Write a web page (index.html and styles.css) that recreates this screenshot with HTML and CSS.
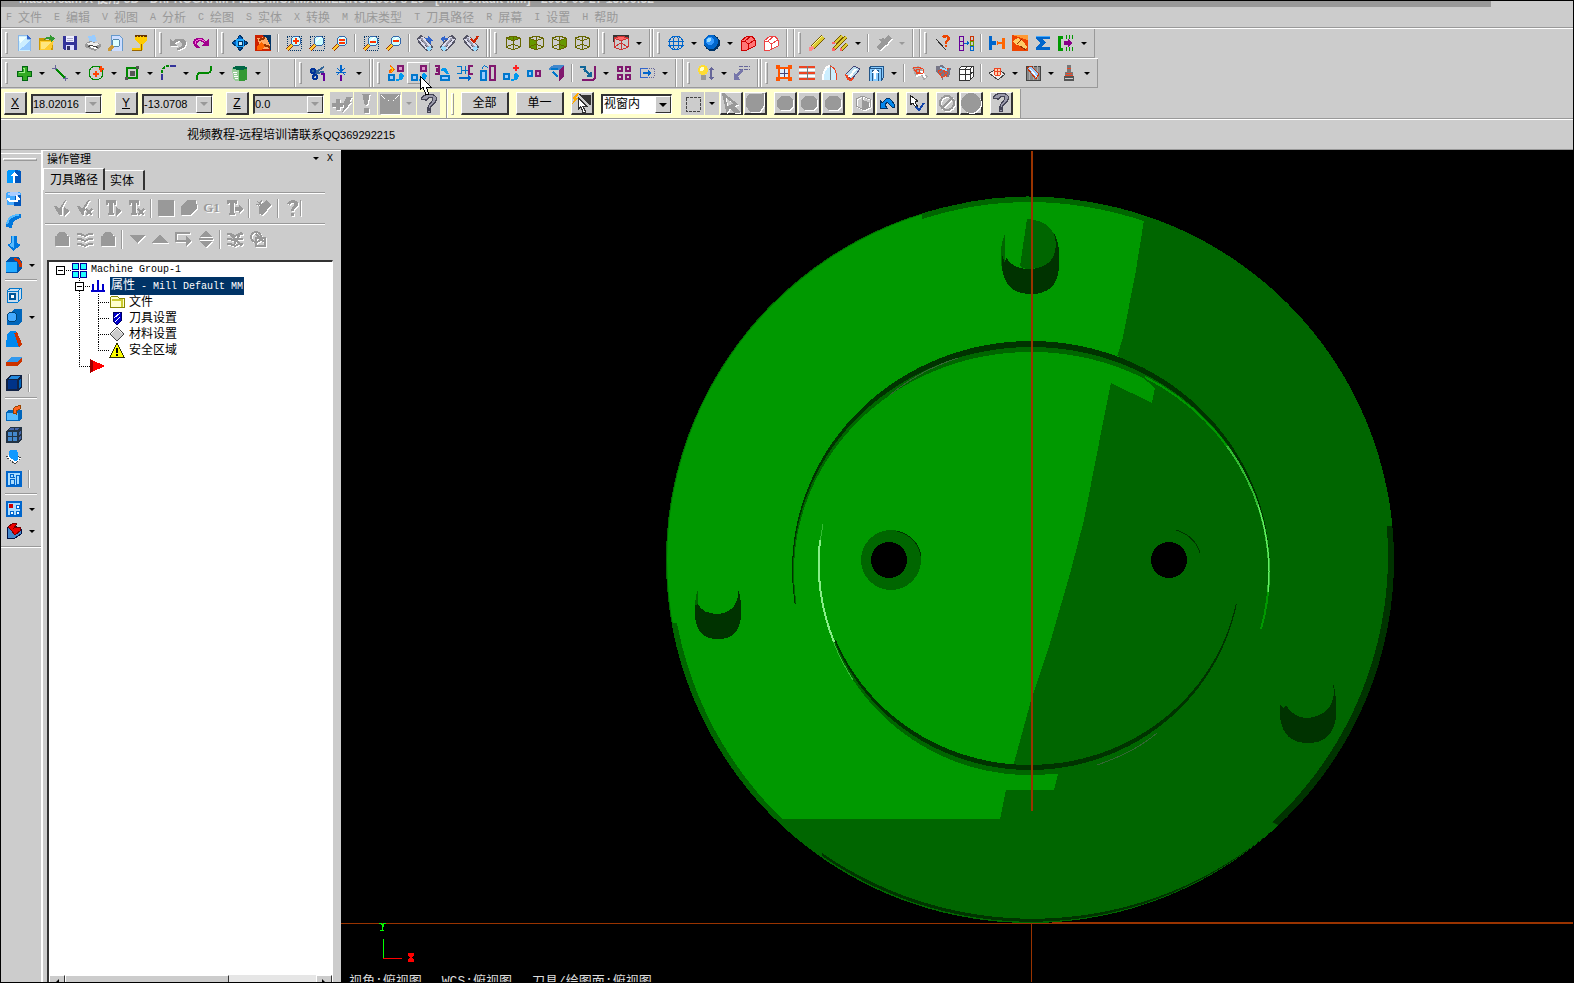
FILE: index.html
```html
<!DOCTYPE html>
<html lang="zh-CN">
<head>
    <meta charset="UTF-8">
    <meta name="viewport" content="width=device-width, initial-scale=1.0">
    <title>Mastercam X</title>
    <link rel="stylesheet" href="styles.css">
</head>
<body>
    <!-- Iconos -->
    <svg class="sprite" aria-hidden="true">
        <symbol id="new" viewBox="0 0 16 16"><path d="M2 0h9l3 3v13H2z" fill="#cef"/><path d="M3 15h11V5L7 12z" fill="#9cf"/><path d="M3 2h7L4 9z" fill="#eff"/><path d="M2 16V0h9v4h3v12z" fill="none" stroke="#8ab8e8"/><path d="M11 0l4 4h-4z" fill="#36c"/></symbol>
        <symbol id="open" viewBox="0 0 16 16"><path d="M0 3h5l2 2h7v10H0z" fill="#c90"/><path d="M1 6h14l-3 9H1z" fill="#fc3"/><path d="M2 7h11l-8 7H2z" fill="#ffe680"/><path d="M5 5c1-3 4-4 6-3V0l5 3-4 4V5C9 4 7 4 5 5z" fill="#393"/></symbol>
        <symbol id="save" viewBox="0 0 16 16"><path d="M1 1h14v14H2l-1-1z" fill="#339"/><path d="M4 1h8v6H4z" fill="#eef"/><path d="M5 3h6M5 5h6" stroke="#aac"/><path d="M4 10h8v5H4z" fill="#ddf"/><path d="M5 11h3v4H5z" fill="#336"/></symbol>
        <symbol id="print" viewBox="0 0 16 16"><path d="M3 1l7-1 2 6-7 2z" fill="#9cf"/><path d="M0 9l5-3 11 3v3l-6 4-10-4z" fill="#999"/><path d="M1 9l5-2 9 2-5 3z" fill="#eee"/><path d="M2 11l8 3 4-2-8-2z" fill="#444"/><path d="M4 12l6 2 3-1-7-2z" fill="#fff"/></symbol>
        <symbol id="preview" viewBox="0 0 16 16"><path d="M3 0h8l3 3v13H3z" fill="#cdf" stroke="#69c"/><circle cx="8" cy="8" r="4" fill="#dff" stroke="#58a"/><path d="M5 11l-5 5" stroke="#c93" stroke-width="3"/></symbol>
        <symbol id="filter" viewBox="0 0 16 16"><path d="M4 0h12v5l-4 4v6H1v-2h8V9L4 5z" fill="#fc0"/><path d="M4 0h12v2H4z" fill="#630"/><path d="M6 1h1M9 1h1M12 1h1" stroke="#fc0"/><path d="M1 15h9V9" fill="none" stroke="#960"/></symbol>
        <symbol id="undo" viewBox="0 0 16 16"><path d="M0 4v7h7L5 8c3-3 8-2 7 2-1 2-3 3-5 3v2c5 0 9-3 9-7 0-5-9-6-13-2z" fill="#999"/></symbol>
        <symbol id="redo" viewBox="0 0 16 16"><path d="M16 4v7H9l2-3C8 5 3 6 4 10l3 3H3C-1 10-1 4 4 3c4-1 7 0 9 3z" fill="#a0008c"/><path d="M2 9c0-5 7-6 10-2" fill="none" stroke="#f6d"/></symbol>
        <symbol id="fit" viewBox="0 0 16 16"><path d="M8 0l3 4H5zM8 16l3-4H5zM0 8l4-3v6zM16 8l-4-3v6z" fill="#06c" stroke="#036"/><path d="M4 4h8v8H4z" fill="#2af"/><path d="M6 6h4v4H6z" fill="#cef" stroke="#036"/></symbol>
        <symbol id="repaint" viewBox="0 0 16 16"><path d="M0 0h16v16H0z" fill="#c20"/><path d="M8 0h8v16z" fill="#036"/><path d="M2 3l9-1 4 8-1 4-8 0z" fill="#fa6"/><path d="M2 12l4-5 4 4-4 4H2z" fill="#f60"/><path d="M4 5l6-2M9 10l6 2" stroke="#930" stroke-width="2"/></symbol>
        <symbol id="lens" viewBox="0 0 16 16"><path d="M7 9l-6 6" stroke="#930" stroke-width="4"/><path d="M7 9l-6 6" stroke="#fc3" stroke-width="2"/><circle cx="10" cy="6" r="5" fill="#cff" stroke="#36a"/><path d="M7 5l3-3h2L7 7z" fill="#fff"/></symbol>
        <symbol id="dots" viewBox="0 0 16 16"><path d="M1 1h14v14H1z" fill="none" stroke="#036" stroke-dasharray="1 1"/></symbol>
        <symbol id="zoom-in" viewBox="0 0 16 16"><use href="#dots"/><use href="#lens"/><path d="M7 6h6M10 3v6" stroke="#f30" stroke-width="2"/></symbol>
        <symbol id="zoom-win" viewBox="0 0 16 16"><use href="#dots"/><use href="#lens"/></symbol>
        <symbol id="zoom-eq" viewBox="0 0 16 16"><use href="#lens"/><path d="M7 5h6M7 8h6" stroke="#f30" stroke-width="2"/></symbol>
        <symbol id="zoom-out" viewBox="0 0 16 16"><use href="#dots"/><use href="#lens"/><path d="M7 7h6" stroke="#f30" stroke-width="2"/></symbol>
        <symbol id="zoom-minus" viewBox="0 0 16 16"><use href="#lens"/><path d="M7 6h6" stroke="#f30" stroke-width="2"/></symbol>
        <symbol id="tube" viewBox="0 0 16 16"><path d="M0 3l4-3 5 3 7 9-2 4h-5L1 7z" fill="#556"/><path d="M2 4l8 10M5 2l8 9" stroke="#dde" stroke-width="2"/><path d="M4 3l8 10" stroke="#99a" stroke-width="2"/><path d="M10 12l4-1 1 3-3 2-2-1z" fill="#9df"/></symbol>
        <symbol id="tube-a" viewBox="0 0 16 16"><use href="#tube"/><path d="M8 3h3V1l5 5h-2v3L9 5z" fill="#36c"/></symbol>
        <symbol id="tube-b" viewBox="0 0 16 16"><g transform="matrix(-1 0 0 1 16 0)"><use href="#tube"/></g><path d="M8 3H5V1L0 4l4 3V5h4z" fill="#36c"/></symbol>
        <symbol id="tube-c" viewBox="0 0 16 16"><use href="#tube"/><path d="M8 4l3 3 4-6" fill="none" stroke="#c20" stroke-width="2"/></symbol>
        <symbol id="wire" viewBox="0 0 16 16"><path d="M8 1l7 2v9l-7 3-7-3V3zM1 3l7 3 7-3M8 1v14M1 12l7-3 7 3" fill="none" stroke="#660"/></symbol>
        <symbol id="cube-t" viewBox="0 0 16 16"><path d="M8 1l7 2-7 3-7-3z" fill="#690"/><use href="#wire"/></symbol>
        <symbol id="cube-l" viewBox="0 0 16 16"><path d="M1 3l7 3v9l-7-3z" fill="#690"/><use href="#wire"/></symbol>
        <symbol id="cube-r" viewBox="0 0 16 16"><path d="M15 3L8 6v9l7-3z" fill="#690"/><use href="#wire"/></symbol>
        <symbol id="cube-red" viewBox="0 0 16 16"><path d="M0 0h16v7H0z" fill="#333"/><path d="M1 3l7-2 7 2v9l-7 3-7-3z" fill="#ccc"/><path d="M1 3l7-2 7 2-7 3z" fill="#f66"/><path d="M8 1l7 2v9l-7 3-7-3V3zM1 3l7 3 7-3M8 6v9M1 12l7-4 7 4" fill="none" stroke="#c33"/></symbol>
        <symbol id="globe" viewBox="0 0 16 16"><g fill="none" stroke="#06c"><circle cx="8" cy="8" r="7"/><ellipse cx="8" cy="8" rx="3" ry="7"/><path d="M0 6h16M0 10h16"/></g></symbol>
        <symbol id="ball" viewBox="0 0 16 16"><circle cx="8" cy="8" r="8" fill="#036"/><circle cx="7" cy="7" r="7" fill="#06c"/><circle cx="6" cy="6" r="4" fill="#39f"/><circle cx="5" cy="5" r="2" fill="#9df"/></symbol>
        <symbol id="block-red" viewBox="0 0 16 16"><path d="M1 6l6-5h5l3 4v6l-8 4H1z" fill="#f77" stroke="#c00"/><path d="M1 6h4l3 3v6M5 6l6-5M8 9l7-4" fill="none" stroke="#c00"/></symbol>
        <symbol id="block-white" viewBox="0 0 16 16"><path d="M1 6l6-5h5l3 4v6l-8 4H1z" fill="#fff" stroke="#e44"/><path d="M1 6h4l3 3v6M5 6l6-5M8 9l7-4" fill="none" stroke="#e44"/></symbol>
        <symbol id="pencil" viewBox="0 0 16 16"><path d="M3 13L14 2" stroke="#750" stroke-width="5"/><path d="M3 13L14 2" stroke="#dc3" stroke-width="3"/><path d="M3 11L13 1" stroke="#ff9"/><path d="M0 12l3-1 2 2-2 3H0z" fill="#f88"/></symbol>
        <symbol id="pencils" viewBox="0 0 16 16"><path d="M3 8l7-7M2 14L14 2M9 15l6-6" stroke="#750" stroke-width="4"/><path d="M3 8l7-7M2 14L14 2M9 15l6-6" stroke="#dc3" stroke-width="2"/><path d="M0 7h3v2H0zM0 13h3v3H0zM8 13h2v3H8z" fill="#f66"/></symbol>
        <symbol id="pencil-off" viewBox="0 0 16 16"><path d="M2 14L14 2" stroke="#999" stroke-width="5"/><path d="M3 4l5-1 4 6-4 2z" fill="#999"/></symbol>
        <symbol id="line-q" viewBox="0 0 16 16"><path d="M1 4l10 11" stroke="#333"/><path d="M7 2c1-3 8-3 8 1 0 3-3 3-3 6h-2c0-4 2-4 2-6 0-1-2-1-3 1zM10 10h2v2h-2z" fill="#e40"/></symbol>
        <symbol id="columns" viewBox="0 0 16 16"><path d="M1 1h4v14H1zM1 6h4M1 10h4" fill="none" stroke="#609"/><path d="M6 8h3V6l2 2-2 3V9H6z" fill="#06c"/><path d="M12 1h3v4h-3z" fill="none" stroke="#c30"/><path d="M12 6h3v4h-3z" fill="none" stroke="#690"/><path d="M12 11h3v4h-3z" fill="none" stroke="#06c"/></symbol>
        <symbol id="clamp" viewBox="0 0 16 16"><path d="M0 1h3v5h4v4H3v5H0z" fill="#06c"/><path d="M16 3h-3v4H9l-1-2v6l1-2h4v5h3z" fill="#f60"/></symbol>
        <symbol id="card" viewBox="0 0 16 16"><path d="M0 0h16v16H0z" fill="#e40"/><path d="M0 0h16v5z" fill="#f93"/><path d="M1 6l5-3 5 3 4 6-2 3-4-4-5-1z" fill="#fc6"/><path d="M5 9l5-5M8 11l6 4" stroke="#930"/></symbol>
        <symbol id="sigma" viewBox="0 0 16 16"><path d="M1 1h14v3H7l4 4-5 4h9v3H1v-3l5-4-5-4z" fill="#06c"/><path d="M1 1h14" stroke="#4af"/></symbol>
        <symbol id="exit" viewBox="0 0 16 16"><path d="M5 2H1v12h4" fill="none" stroke="#090" stroke-width="3"/><path d="M6 6h4V4l5 4-5 4v-2H6z" fill="#808"/><path d="M8 0v4M11 0v4M14 0v4M8 12v4M11 12v4M14 12v4" stroke="#090"/></symbol>
        <symbol id="plus" viewBox="0 0 16 16"><path d="M6 1h5v5h4v5h-4v4H6v-4H1V6h5z" fill="#3a2" stroke="#061"/><path d="M7 3h1v4H3" fill="none" stroke="#9e8"/></symbol>
        <symbol id="line" viewBox="0 0 16 16"><path d="M3 3l10 10" stroke="#080" stroke-width="2"/><path d="M0 3h5M3 0v5M11 13h5M13 11v5" stroke="#669"/></symbol>
        <symbol id="circle" viewBox="0 0 16 16"><circle cx="8" cy="8" r="7" fill="none" stroke="#080"/><path d="M5 9h6M8 6v6M11 4h5M13 1v6" stroke="#f40" stroke-width="2"/></symbol>
        <symbol id="rect" viewBox="0 0 16 16"><path d="M3 3h10v10H3z" fill="none" stroke="#080" stroke-width="2"/><path d="M6 6h5v5H6zM12 1h3v3h-3zM1 12h3v3H1z" fill="#555"/></symbol>
        <symbol id="fillet" viewBox="0 0 16 16"><path d="M2 15V9M10 1h6" stroke="#339" stroke-width="2"/><path d="M2 8c0-4 3-7 7-7" fill="none" stroke="#080" stroke-width="2" stroke-dasharray="3 1"/></symbol>
        <symbol id="spline" viewBox="0 0 16 16"><path d="M1 15c0-8 1-7 7-7s7 0 7-7" fill="none" stroke="#080" stroke-width="2"/></symbol>
        <symbol id="cyl" viewBox="0 0 16 16"><path d="M0 3h15v12l-4 1H3l-2-3z" fill="#9c9"/><path d="M7 4h8v11l-4 1H7z" fill="#393"/><ellipse cx="8" cy="3" rx="7" ry="2" fill="#064"/><path d="M1 7h4M2 9h3M2 11h4M3 13h3" stroke="#fff"/></symbol>
        <symbol id="scissors" viewBox="0 0 16 16"><path d="M1 6l5 1 8-5M4 12l2-4 8-1" fill="none" stroke="#369" stroke-width="2"/><circle cx="3" cy="6" r="2" fill="none" stroke="#039" stroke-width="2"/><circle cx="5" cy="12" r="2" fill="none" stroke="#039" stroke-width="2"/><path d="M14 9v7M11 9h4" stroke="#609" stroke-width="2"/></symbol>
        <symbol id="break" viewBox="0 0 16 16"><path d="M8 0v7" stroke="#06c" stroke-width="2"/><path d="M8 10v6" stroke="#609" stroke-width="2"/><path d="M4 3l8 7M12 3l-8 7M3 7h10" stroke="#06c"/></symbol>
        <symbol id="sq2" viewBox="0 0 16 16"><path d="M10 1h5v5h-5z" fill="#d9c" stroke="#80186e" stroke-width="2"/><path d="M1 10h5v5H1z" fill="#9cf" stroke="#07c" stroke-width="2"/></symbol>
        <symbol id="x1" viewBox="0 0 16 16"><use href="#sq2"/><path d="M2 0l3 3 2 1-3 4H1V5l2-1z" fill="#f60"/><path d="M3 2l2 3-2 2" fill="none" stroke="#fd0"/><path d="M8 14c4 1 4-4 2-4l3-2 3 3c0 3-4 5-8 5z" fill="#09e"/></symbol>
        <symbol id="x2" viewBox="0 0 16 16"><use href="#sq2"/><path d="M8 14c4 1 4-4 2-4l3-2 3 3c0 3-4 5-8 5z" fill="#09e"/></symbol>
        <symbol id="x3" viewBox="0 0 16 16"><path d="M1 1h4v3H3v2h2v3H1" fill="none" stroke="#80186e" stroke-width="2"/><path d="M7 11h8v4H7z" fill="#9cf" stroke="#07c" stroke-width="2"/><path d="M8 3h4l3 6h-3L9 6H7z" fill="#09e"/></symbol>
        <symbol id="x4" viewBox="0 0 16 16"><path d="M0 1h4v7H0M8 1v8M5 5h6" fill="none" stroke="#07c"/><path d="M16 1h-4v8h4" fill="none" stroke="#80186e" stroke-width="2"/><path d="M2 12h9v-2l4 3-4 3v-2H2z" fill="#06c"/></symbol>
        <symbol id="x5" viewBox="0 0 16 16"><path d="M1 6h5v9H1z" fill="#9cf" stroke="#07c" stroke-width="2"/><path d="M10 1h5v14h-5z" fill="#ccc" stroke="#80186e" stroke-width="2"/><path d="M2 4c1-4 4-4 6-1" fill="none" stroke="#07c"/></symbol>
        <symbol id="x6" viewBox="0 0 16 16"><path d="M10 3h6M13 0v6" stroke="#f22" stroke-width="2"/><path d="M1 9h5v5H1z" fill="#9cf" stroke="#07c" stroke-width="2"/><path d="M8 14c4 1 4-4 2-4l3-2 3 3c0 3-4 5-8 5z" fill="#09e"/></symbol>
        <symbol id="x7" viewBox="0 0 16 16"><path d="M2 6h4v5H2z" fill="#9cf" stroke="#07c" stroke-width="2"/><path d="M10 6h4v5h-4z" fill="#d9c" stroke="#80186e" stroke-width="2"/></symbol>
        <symbol id="x8" viewBox="0 0 16 16"><path d="M0 3l5-3h10v2l-5 3H0z" fill="#48c"/><path d="M10 5l5-4v11l-5 4z" fill="#80186e"/><path d="M2 4h7M4 7l5 5" stroke="#07c" stroke-width="2"/></symbol>
        <symbol id="offset" viewBox="0 0 16 16"><path d="M0 2h5v5M4 4l7 7M11 7v4H7" fill="none" stroke="#169" stroke-width="2"/><path d="M2 15h9c3 0 4-1 4-4V1" fill="none" stroke="#80186e" stroke-width="2"/></symbol>
        <symbol id="grid4" viewBox="0 0 16 16"><path d="M2 2h4v4H2zM10 2h4v4h-4zM2 10h4v4H2zM10 10h4v4h-4z" fill="#ccc" stroke="#80186e" stroke-width="2"/></symbol>
        <symbol id="stretch" viewBox="0 0 16 16"><path d="M9 3H1v9h8" fill="none" stroke="#36c"/><path d="M4 7h5V5l3 3-3 3V9H4z" fill="#06c"/><path d="M10 3h5v9h-5" fill="none" stroke="#669" stroke-dasharray="1 1"/></symbol>
        <symbol id="bulb" viewBox="0 0 16 16"><circle cx="5" cy="5" r="5" fill="#fd3"/><circle cx="4" cy="4" r="2" fill="#ffc"/><path d="M3 10h5v5H3z" fill="#999"/><path d="M13 2l3 3h-2v7h2l-3 3-3-3h2V5h-2z" fill="#669"/></symbol>
        <symbol id="leader" viewBox="0 0 16 16"><path d="M5 1h11M5 4h11" stroke="#669" stroke-dasharray="4 1"/><path d="M9 6l-5 5 2 4H0V8l2 1 5-5z" fill="#77a"/></symbol>
        <symbol id="g-box" viewBox="0 0 16 16"><path d="M0 0h4v2h8V0h4v4h-2v8h2v4h-4v-2H4v2H0v-4h2V4H0z" fill="#f50"/><path d="M4 4h8v8H4z" fill="#def"/><path d="M8 4v8M4 8h8" stroke="#447"/></symbol>
        <symbol id="g-lines" viewBox="0 0 16 16"><path d="M0 2h16M0 8h16M0 14h16" stroke="#e42" stroke-width="2"/><path d="M0 5h16M0 11h16" stroke="#fff" stroke-width="2"/><path d="M8 1v14" stroke="#777"/></symbol>
        <symbol id="g-rev" viewBox="0 0 16 16"><path d="M8 1c5 1 7 6 7 14H1C1 7 3 2 8 1z" fill="#cef"/><path d="M8 1C3 2 1 8 1 15" fill="none" stroke="#fff" stroke-width="2"/><path d="M8 0v15" stroke="#777"/><path d="M8 1c5 1 7 6 7 14" fill="none" stroke="#e42"/></symbol>
        <symbol id="g-swept" viewBox="0 0 16 16"><path d="M0 10L9 1l6 3-8 10z" fill="#bde" stroke="#447"/><path d="M4 12l7-8" stroke="#fff" stroke-width="2"/><path d="M0 10l2 1 1 3 3 1 2-2" fill="none" stroke="#e42" stroke-width="2"/></symbol>
        <symbol id="g-draft" viewBox="0 0 16 16"><path d="M1 3l3-2h11v12l-2 3H1z" fill="#8cf" stroke="#258"/><path d="M1 3h12v12M4 5h6v11H4z" fill="none" stroke="#258"/><path d="M7 4l4 4H8v6H6V8H3z" fill="#fff"/></symbol>
        <symbol id="g-net" viewBox="0 0 16 16"><path d="M0 3l6-2 4 3 2 5 4 2-4 5-3-6-5 2z" fill="#aaa"/><path d="M4 11l7-2 2 4M9 6l4 6" fill="none" stroke="#fff" stroke-width="2"/><path d="M1 2h5l5 2v4L5 9zM4 4h3v3H4z" fill="none" stroke="#e42"/></symbol>
        <symbol id="g-net2" viewBox="0 0 16 16"><path d="M1 1l7-1 3 4 5-1-2 9-5-1-2 5-1-6-5-3z" fill="#778"/><path d="M3 6l5-2 5 4-6 5zM6 2l6 10M14 3L4 10" fill="none" stroke="#e42"/><path d="M5 3l7 2" stroke="#9df" stroke-width="2"/></symbol>
        <symbol id="g-cube" viewBox="0 0 16 16"><path d="M1 4l3-3h11v11l-3 3H1z" fill="#fff"/><path d="M1 4l3-3h11v11l-3 3H1zM1 4h11v11M12 4l3-3M7 4v11M1 9h11l3-2M7 4l3-3" fill="none" stroke="#333"/></symbol>
        <symbol id="g-surf" viewBox="0 0 16 16"><path d="M0 8l8-4 8 5-7 6z" fill="#eee" stroke="#444"/><path d="M5 3h7l-1 7H6zM5 6h7M8 3v7" fill="#fca" stroke="#e42"/></symbol>
        <symbol id="g-hatch" viewBox="0 0 16 16"><path d="M1 1h14v14H1z" fill="#888" stroke="#444"/><path d="M4 1v14M8 1v14M12 1v14" stroke="#aaa"/><path d="M2 3l4-2 8 8-3 5z" fill="#9cf" stroke="#c30"/><path d="M5 4l7 8" stroke="#fff"/></symbol>
        <symbol id="g-tool" viewBox="0 0 16 16"><path d="M6 0h4v7h2v3H4V7h2z" fill="#777"/><path d="M3 11h10v5H3z" fill="#555"/><path d="M6 3h4M5 8h6M4 10h8" stroke="#e42"/><path d="M4 13h8" stroke="#ccc"/></symbol>

        <symbol id="flash" viewBox="0 0 16 16"><path d="M3 4h3v3h3v3H6v3H3v-3H0V7h3zM8 9l4-7h4l-2 4h2l-8 9 2-6z" fill="#999"/></symbol>
        <symbol id="bang" viewBox="0 0 16 16"><path d="M5 0h6L9 9H7zM6 11h4v4H6z" fill="#999"/></symbol>
        <symbol id="box-off" viewBox="0 0 16 16"><path d="M0 0h16v16H0z" fill="#999"/><path d="M1 1l3 3M15 1l-3 3M6 5h1M10 5h1" stroke="#fff"/></symbol>
        <symbol id="help" viewBox="0 0 16 16"><path d="M2 4c1-5 12-5 12 0 0 4-5 4-5 8H7c0-5 4-5 4-8 0-2-4-2-5 1zM7 13h2v2H7z" fill="#99a" stroke="#445"/></symbol>
        <symbol id="pick" viewBox="0 0 16 16"><path d="M5 1l10 1v8l-3-2z" fill="#333"/><path d="M5 4v9l2-2 2 5 2-1-2-4h3z" fill="#fff" stroke="#333"/><path d="M4 0L0 5h2l-2 4 5-5H3l3-4z" fill="#fa0"/></symbol>
        <symbol id="dash-box" viewBox="0 0 16 16"><path d="M1 1h14v14H1z" fill="none" stroke="#444" stroke-dasharray="3 1"/></symbol>
        <symbol id="arrow-off" viewBox="0 0 16 16"><path d="M2 1l10 8-3 1 5 5-2 1-5-5-2 3z" fill="none" stroke="#999" stroke-width="2"/></symbol>
        <symbol id="shape-off" viewBox="0 0 16 16"><path d="M3 1h9l3-1v10l-3 5H4L1 11V4z" fill="#999"/></symbol>
        <symbol id="poly-off" viewBox="0 0 16 16"><path d="M4 1h8l4 4v7l-4 3H4l-4-3V5z" fill="#999"/></symbol>
        <symbol id="cube-off" viewBox="0 0 16 16"><path d="M1 4l6-3 8 3v8l-6 3-8-4zM7 1v13" fill="none" stroke="#999"/><path d="M7 5l7 2v6l-7 2z" fill="#999"/></symbol>
        <symbol id="back" viewBox="0 0 16 16"><path d="M1 5v8h7l-2-3 2-3 5 5h3C15 7 11 3 8 3L3 8z" fill="#08e" stroke="#036"/></symbol>
        <symbol id="check-pick" viewBox="0 0 16 16"><path d="M1 0l8 6-3 1 3 5-2 1-3-5-3 2z" fill="#fff" stroke="#222"/><path d="M7 12l3 3 5-7" fill="none" stroke="#14a" stroke-width="2"/></symbol>
        <symbol id="no" viewBox="0 0 16 16"><circle cx="8" cy="8" r="7" fill="none" stroke="#999" stroke-width="2"/><path d="M3 13L13 3" stroke="#999" stroke-width="2"/></symbol>
        <symbol id="disc-off" viewBox="0 0 16 16"><circle cx="8" cy="8" r="8" fill="#999"/></symbol>

        <symbol id="s1" viewBox="0 0 16 16"><path d="M1 2c3-2 11-2 14 0v12H1z" fill="#09f"/><path d="M9 1l6 1v12H8z" fill="#05b"/><path d="M8 3l4 4h-3v7H7V7H4z" fill="#fff"/></symbol>
        <symbol id="s2" viewBox="0 0 16 16"><path d="M0 2c3-2 12-2 15 0v12H1z" fill="#4af"/><path d="M9 4h6v11H8z" fill="#05b"/><ellipse cx="8" cy="3" rx="6" ry="2" fill="#acf"/><path d="M2 7c0 3 5 4 9 3V6l3 3M2 7l3 4" fill="none" stroke="#fff" stroke-width="2"/></symbol>
        <symbol id="s3" viewBox="0 0 16 16"><path d="M0 14C0 5 6 1 15 1v4c-5 1-9 3-9 10z" fill="#07d"/><path d="M1 11C2 5 7 2 13 2" fill="none" stroke="#5bf" stroke-width="2"/></symbol>
        <symbol id="s4" viewBox="0 0 16 16"><path d="M5 1h6v7l4 2-8 6-6-6 4-2z" fill="#07d"/><path d="M6 1h2v12l-5-3 3-2z" fill="#5bf"/></symbol>
        <symbol id="s5" viewBox="0 0 16 16"><path d="M0 4l4-4h9l3 5v6l-4 5H0z" fill="#05a"/><path d="M0 5h11v10H0z" fill="#2af"/><path d="M8 1c5 0 8 3 8 9h-3c0-4-1-6-5-7z" fill="#c30"/></symbol>
        <symbol id="s6" viewBox="0 0 16 16"><path d="M1 4l4-3h10v11l-3 3H1z" fill="#cde" stroke="#07c"/><path d="M1 4h11v11M12 4l3-3" fill="none" stroke="#07c"/><path d="M3 6h7v7H3z" fill="#059"/><path d="M5 8h3v3H5z" fill="#fff"/></symbol>
        <symbol id="s7" viewBox="0 0 16 16"><path d="M6 2l3-2h7v12l-3 4H1V9z" fill="#06b"/><circle cx="6" cy="8" r="5" fill="#4af" stroke="#047"/></symbol>
        <symbol id="s8" viewBox="0 0 16 16"><path d="M1 3l3-3h6l5 14-3 2H0z" fill="#08e"/><path d="M8 2l3-1 5 12-3 3z" fill="#c30"/></symbol>
        <symbol id="s9" viewBox="0 0 16 16"><path d="M0 9l5-5h11l-4 5z" fill="#39e"/><path d="M0 9h12v4H0zM12 9l4-5v4l-4 5z" fill="#c30"/></symbol>
        <symbol id="s10" viewBox="0 0 16 16"><path d="M0 4l4-4h12v12l-4 4H0z" fill="#124"/><path d="M2 5h9v9H2z" fill="#038"/><path d="M2 4l3-3h9l-2 3z" fill="#28d"/><path d="M13 5l2-2v8l-2 2z" fill="#06b"/></symbol>
        <symbol id="s11" viewBox="0 0 16 16"><path d="M0 7l3-2h13v8l-3 3H0z" fill="#06b"/><path d="M1 8h11v7H1z" fill="#5bf"/><path d="M7 8V4l2-2 6-2-1 4-4 2v3z" fill="#f62" stroke="#940"/></symbol>
        <symbol id="s12" viewBox="0 0 16 16"><path d="M0 4l4-4h12v12l-4 4H0z" fill="#234"/><path d="M2 5h4v4H2zM7 5h4v4H7zM2 10h4v4H2zM7 10h4v4H7z" fill="#48c"/><path d="M4 1h4v2H3zM9 1h4l-1 2H9zM13 5l2-2v4l-2 1zM13 10l2-2v3l-2 2z" fill="#46a"/></symbol>
        <symbol id="s13" viewBox="0 0 16 16"><path d="M0 8l5-3 10 4-6 6z" fill="#fff" stroke="#444" stroke-dasharray="2 1"/><path d="M3 2c2-2 8-2 9 1v8c-2 2-4 1-6-1L3 8z" fill="#19f"/></symbol>
        <symbol id="s14" viewBox="0 0 16 16"><path d="M1 1h14v14H1z" fill="#adf" stroke="#06c" stroke-width="2"/><path d="M4 6c0-4 4-4 4 0zM4 8h4v5H4zM10 4h3v9h-3z" fill="none" stroke="#06c"/></symbol>
        <symbol id="s15" viewBox="0 0 16 16"><path d="M1 1h14v14H1z" fill="#adf" stroke="#06c" stroke-width="2"/><path d="M3 3h4v4H3z" fill="#c00"/><path d="M10 4h3v3h-3zM4 10h3v3H4zM10 10h3v3h-3z" fill="#fff" stroke="#06c"/></symbol>
        <symbol id="s16" viewBox="0 0 16 16"><path d="M1 5l5-3 9 4v5l-6 4H1z" fill="#48c" stroke="#014"/><path d="M2 4l5-4 4 1-3 4 6-1 1 3-6 5-3-4z" fill="#e00" stroke="#700"/></symbol>

        <symbol id="m-check" viewBox="0 0 16 16"><path d="M0 6h3l2 3 6-9h1L8 8v7H5zM10 7l6 4-6 5z" fill="#999"/></symbol>
        <symbol id="m-checkx" viewBox="0 0 16 16"><path d="M0 6h3l2 3 6-9h2L8 8l-1 7H5z" fill="#999"/><path d="M9 9l6 6M15 9l-6 6" stroke="#999" stroke-width="2"/></symbol>
        <symbol id="m-t" viewBox="0 0 16 16"><path d="M0 0h10v5H8V3H7v10h1v2H2v-2h1V3H2v2H0zM10 7l6 4-6 5z" fill="#999"/></symbol>
        <symbol id="m-tx" viewBox="0 0 16 16"><path d="M0 0h10v5H8V3H7v10h1v2H2v-2h1V3H2v2H0z" fill="#999"/><path d="M9 9l6 6M15 9l-6 6" stroke="#999" stroke-width="2"/></symbol>
        <symbol id="m-sq" viewBox="0 0 16 16"><path d="M0 0h16v16H0z" fill="#999"/></symbol>
        <symbol id="m-blob" viewBox="0 0 16 16"><path d="M0 6l6-6h9l1 8-7 7H0z" fill="#999"/></symbol>
        <symbol id="m-tarrow" viewBox="0 0 16 16"><path d="M0 0h10v4H8V3H7v10h1v2H2v-2h1V3H2v1H0zM8 7h4V4l4 5-4 5v-3H8z" fill="#999"/></symbol>
        <symbol id="m-pen" viewBox="0 0 16 16"><path d="M3 6l8-6 4 5-8 10-4-1z" fill="#999"/><path d="M1 1l5 4M6 0L2 6M0 4h5" stroke="#999"/></symbol>
        <symbol id="m-q" viewBox="0 0 16 16"><path d="M2 4c1-5 11-5 11 0 0 4-4 3-4 7H6c0-4 3-4 3-7 0-2-3-2-4 1zM6 13h3v3H6zM15 0h1v16h-1z" fill="#999"/></symbol>
        <symbol id="m-lock" viewBox="0 0 16 16"><path d="M1 5h14v10H1z" fill="#999"/><path d="M3 6V5c0-6 10-6 10 0v1z" fill="#999"/></symbol>
        <symbol id="m-wave" viewBox="0 0 16 16"><path d="M0 4c4-4 6 3 10 0 2-2 4-1 6-1M0 9c4-4 6 3 10 0 2-2 4-1 6-1M0 14c4-4 6 3 10 0 2-2 4-1 6-1" fill="none" stroke="#999" stroke-width="2"/></symbol>
        <symbol id="m-down" viewBox="0 0 16 16"><path d="M0 4h16l-8 8z" fill="#999"/></symbol>
        <symbol id="m-up" viewBox="0 0 16 16"><path d="M0 12h16L8 3z" fill="#999"/></symbol>
        <symbol id="m-ret" viewBox="0 0 16 16"><path d="M15 2H1v8h10" fill="none" stroke="#999" stroke-width="2"/><path d="M11 5l5 5-5 5z" fill="#999"/></symbol>
        <symbol id="m-ud" viewBox="0 0 16 16"><path d="M8 0l7 6H1zM8 16l7-6H1zM1 7h14v2H1z" fill="#999"/></symbol>
        <symbol id="m-wavex" viewBox="0 0 16 16"><use href="#m-wave"/><path d="M4 4l11 11M14 1L7 14" stroke="#999" stroke-width="2"/></symbol>
        <symbol id="m-shapes" viewBox="0 0 16 16"><circle cx="6" cy="6" r="5" fill="none" stroke="#999" stroke-width="2"/><path d="M6 7h9v8H6zM6 3l8 8" fill="none" stroke="#999" stroke-width="2"/></symbol>

        <symbol id="t-group" viewBox="0 0 16 16"><path d="M1 1h6v6H1zM9 1h6v6H9zM1 9h6v6H1zM9 9h6v6H9z" fill="#2ff" stroke="#009"/></symbol>
        <symbol id="t-mill" viewBox="0 0 16 16"><path d="M1 13h14M3 6v8M8 2v12M13 6v8" stroke="#00c" stroke-width="2"/></symbol>
        <symbol id="t-folder" viewBox="0 0 16 16"><path d="M1 4l2-2h5l2 2h5v9H1z" fill="#ffc" stroke="#880"/><path d="M3 6h10v7" fill="none" stroke="#cc3" stroke-width="2"/></symbol>
        <symbol id="t-tool" viewBox="0 0 16 16"><path d="M4 2h8v9l-4 4-4-4z" fill="#00c" stroke="#006"/><path d="M5 8l6-5M6 12l5-5" stroke="#fff"/></symbol>
        <symbol id="t-stock" viewBox="0 0 16 16"><path d="M8 1l7 7-7 7-7-7z" fill="#ccc" stroke="#444"/><path d="M2 8l6-6 5 5" fill="none" stroke="#fff"/></symbol>
        <symbol id="t-warn" viewBox="0 0 16 16"><path d="M8 1l7 14H1z" fill="#ff0" stroke="#330"/><path d="M8 6v5M8 12v2" stroke="#000" stroke-width="2"/></symbol>
        <symbol id="t-insert" viewBox="0 0 16 16"><path d="M0 1l15 7-15 7z" fill="#f00"/><path d="M0 1l3 2v10l-3 2z" fill="#900"/></symbol>
    </svg>

    <header class="titlebar">
        <h1 class="title">Mastercam X 使用 3D - D:\PROGRAM FILES\MCAMX\MILL\NC\2008-8-29 - [Mill Default MM] - 2008-09-27 15:06:32</h1>
    </header>

    <nav class="menu">
        <a href="#"><span class="key">F</span>文件</a>
        <a href="#"><span class="key">E</span>编辑</a>
        <a href="#"><span class="key">V</span>视图</a>
        <a href="#"><span class="key">A</span>分析</a>
        <a href="#"><span class="key">C</span>绘图</a>
        <a href="#"><span class="key">S</span>实体</a>
        <a href="#"><span class="key">X</span>转换</a>
        <a href="#"><span class="key">M</span>机床类型</a>
        <a href="#"><span class="key">T</span>刀具路径</a>
        <a href="#"><span class="key">R</span>屏幕</a>
        <a href="#"><span class="key">I</span>设置</a>
        <a href="#"><span class="key">H</span>帮助</a>
    </nav>

    <!-- Barra 1 -->
    <div class="row">
        <div class="band">
            <button class="tb" aria-label="新建"><svg><use href="#new"/></svg></button>
            <button class="tb" aria-label="打开"><svg><use href="#open"/></svg></button>
            <button class="tb" aria-label="保存"><svg><use href="#save"/></svg></button>
            <button class="tb" aria-label="打印"><svg><use href="#print"/></svg></button>
            <button class="tb" aria-label="预览"><svg><use href="#preview"/></svg></button>
            <button class="tb" aria-label="过滤"><svg><use href="#filter"/></svg></button>
        </div>
        <div class="band">
            <button class="tb off" aria-label="撤销"><svg><use href="#undo"/></svg></button>
            <button class="tb" aria-label="重做"><svg><use href="#redo"/></svg></button>
        </div>
        <div class="band">
            <button class="tb" aria-label="适度化"><svg><use href="#fit"/></svg></button>
            <button class="tb" aria-label="重画"><svg><use href="#repaint"/></svg></button>
            <span class="sep"></span>
            <button class="tb" aria-label="放大"><svg><use href="#zoom-in"/></svg></button>
            <button class="tb" aria-label="窗口"><svg><use href="#zoom-win"/></svg></button>
            <button class="tb" aria-label="还原"><svg><use href="#zoom-eq"/></svg></button>
            <span class="sep"></span>
            <button class="tb" aria-label="缩小一半"><svg><use href="#zoom-out"/></svg></button>
            <button class="tb" aria-label="缩小"><svg><use href="#zoom-minus"/></svg></button>
            <span class="sep"></span>
            <button class="tb" aria-label="旋转"><svg><use href="#tube-a"/></svg></button>
            <button class="tb" aria-label="上一视图"><svg><use href="#tube-b"/></svg></button>
            <button class="tb" aria-label="确认视图"><svg><use href="#tube-c"/></svg></button>
        </div>
        <span class="stub"></span>
        <div class="band">
            <button class="tb" aria-label="俯视"><svg><use href="#cube-t"/></svg></button>
            <button class="tb" aria-label="前视"><svg><use href="#cube-l"/></svg></button>
            <button class="tb" aria-label="侧视"><svg><use href="#cube-r"/></svg></button>
            <button class="tb" aria-label="等角"><svg><use href="#wire"/></svg></button>
        </div>
        <div class="band">
            <button class="tb" aria-label="构图面"><svg><use href="#cube-red"/></svg></button>
            <button class="drop" aria-label="更多"></button>
        </div>
        <span class="stub"></span>
        <div class="band">
            <button class="tb" aria-label="线框"><svg><use href="#globe"/></svg></button>
            <button class="drop" aria-label="更多"></button>
            <button class="tb" aria-label="着色"><svg><use href="#ball"/></svg></button>
            <button class="drop" aria-label="更多"></button>
            <button class="tb" aria-label="实体着色"><svg><use href="#block-red"/></svg></button>
            <button class="tb" aria-label="实体线框"><svg><use href="#block-white"/></svg></button>
        </div>
        <span class="stub wide"></span>
        <div class="band">
            <button class="tb" aria-label="删除"><svg><use href="#pencil"/></svg></button>
            <button class="tb" aria-label="删除重复"><svg><use href="#pencils"/></svg></button>
            <button class="drop" aria-label="更多"></button>
            <span class="sep"></span>
            <button class="tb off" aria-label="恢复"><svg><use href="#pencil-off"/></svg></button>
            <button class="drop dim" aria-label="更多"></button>
        </div>
        <span class="stub wide"></span>
        <div class="band">
            <button class="tb" aria-label="分析"><svg><use href="#line-q"/></svg></button>
            <button class="tb" aria-label="属性"><svg><use href="#columns"/></svg></button>
            <span class="sep"></span>
            <button class="tb" aria-label="夹具"><svg><use href="#clamp"/></svg></button>
            <button class="tb" aria-label="卡片"><svg><use href="#card"/></svg></button>
            <button class="tb" aria-label="统计"><svg><use href="#sigma"/></svg></button>
            <button class="tb" aria-label="运行"><svg><use href="#exit"/></svg></button>
            <button class="drop" aria-label="更多"></button>
        </div>
    </div>

    <!-- Barra 2 -->
    <div class="row">
        <div class="band">
            <button class="tb" aria-label="点"><svg><use href="#plus"/></svg></button>
            <button class="drop" aria-label="更多"></button>
            <button class="tb" aria-label="直线"><svg><use href="#line"/></svg></button>
            <button class="drop" aria-label="更多"></button>
            <button class="tb" aria-label="圆弧"><svg><use href="#circle"/></svg></button>
            <button class="drop" aria-label="更多"></button>
            <button class="tb" aria-label="矩形"><svg><use href="#rect"/></svg></button>
            <button class="drop" aria-label="更多"></button>
            <button class="tb" aria-label="倒圆角"><svg><use href="#fillet"/></svg></button>
            <button class="drop" aria-label="更多"></button>
            <button class="tb" aria-label="曲线"><svg><use href="#spline"/></svg></button>
            <button class="drop" aria-label="更多"></button>
            <button class="tb" aria-label="圆柱"><svg><use href="#cyl"/></svg></button>
            <button class="drop" aria-label="更多"></button>
        </div>
        <span class="stub blank"></span>
        <div class="band">
            <button class="tb" aria-label="修剪"><svg><use href="#scissors"/></svg></button>
            <button class="tb" aria-label="打断"><svg><use href="#break"/></svg></button>
            <button class="drop" aria-label="更多"></button>
        </div>
        <span class="stub"></span>
        <div class="band">
            <button class="tb" aria-label="动态转换"><svg><use href="#x1"/></svg></button>
            <button class="tb hot" aria-label="平移"><svg><use href="#x2"/></svg></button>
            <button class="tb" aria-label="3D 平移"><svg><use href="#x3"/></svg></button>
            <button class="tb" aria-label="镜像"><svg><use href="#x4"/></svg></button>
            <button class="tb" aria-label="旋转"><svg><use href="#x5"/></svg></button>
            <button class="tb" aria-label="比例"><svg><use href="#x6"/></svg></button>
            <button class="tb" aria-label="移动"><svg><use href="#x7"/></svg></button>
            <button class="tb" aria-label="投影"><svg><use href="#x8"/></svg></button>
            <span class="sep"></span>
            <button class="tb" aria-label="补正"><svg><use href="#offset"/></svg></button>
            <button class="drop" aria-label="更多"></button>
            <button class="tb" aria-label="阵列"><svg><use href="#grid4"/></svg></button>
            <button class="tb" aria-label="拖拽"><svg><use href="#stretch"/></svg></button>
            <button class="drop" aria-label="更多"></button>
        </div>
        <span class="stub wide"></span>
        <div class="band">
            <button class="tb" aria-label="标注"><svg><use href="#bulb"/></svg></button>
            <button class="drop" aria-label="更多"></button>
            <button class="tb" aria-label="引线"><svg><use href="#leader"/></svg></button>
        </div>
        <span class="stub"></span>
        <div class="band">
            <button class="tb" aria-label="边界"><svg><use href="#g-box"/></svg></button>
            <button class="tb" aria-label="直纹"><svg><use href="#g-lines"/></svg></button>
            <button class="tb" aria-label="旋转曲面"><svg><use href="#g-rev"/></svg></button>
            <button class="tb" aria-label="扫描"><svg><use href="#g-swept"/></svg></button>
            <button class="tb" aria-label="牵引"><svg><use href="#g-draft"/></svg></button>
            <button class="drop" aria-label="更多"></button>
            <span class="sep"></span>
            <button class="tb" aria-label="网状"><svg><use href="#g-net"/></svg></button>
            <button class="tb" aria-label="围篱"><svg><use href="#g-net2"/></svg></button>
            <button class="tb" aria-label="由实体"><svg><use href="#g-cube"/></svg></button>
            <span class="sep"></span>
            <button class="tb" aria-label="曲面修剪"><svg><use href="#g-surf"/></svg></button>
            <button class="drop" aria-label="更多"></button>
            <button class="tb" aria-label="曲面倒角"><svg><use href="#g-hatch"/></svg></button>
            <button class="drop" aria-label="更多"></button>
            <button class="tb" aria-label="刀具"><svg><use href="#g-tool"/></svg></button>
            <button class="drop" aria-label="更多"></button>
        </div>
    </div>

    <!-- Coordenadas y seleccion -->
    <div class="row inputs">
        <div class="coords">
            <label class="btn3d" for="cx"><u>X</u></label>
            <span class="combo"><input id="cx" type="text" value="18.02016"><button class="down dim" aria-label="X 列表"></button></span>
            <label class="btn3d" for="cy"><u>Y</u></label>
            <span class="combo"><input id="cy" type="text" value="-13.0708"><button class="down dim" aria-label="Y 列表"></button></span>
            <label class="btn3d" for="cz"><u>Z</u></label>
            <span class="combo last"><input id="cz" type="text" value="0.0"><button class="down dim" aria-label="Z 列表"></button></span>
            <span class="group">
                <button class="flat off" aria-label="快速点"><svg class="big"><use href="#flash"/></svg></button>
                <button class="flat off" aria-label="配置"><svg class="big"><use href="#bang"/></svg></button>
                <button class="flat off" aria-label="捕捉"><svg class="big"><use href="#box-off"/></svg></button>
                <button class="drop dim tall" aria-label="更多"></button>
                <button class="flat" aria-label="帮助"><svg class="big"><use href="#help"/></svg></button>
            </span>
        </div>
        <div class="select-bar">
            <span class="grip"></span>
            <button class="btn3d word">全部</button>
            <button class="btn3d word">单一</button>
            <button class="btn3d" aria-label="选择"><svg class="big"><use href="#pick"/></svg></button>
            <span class="view-select"><select aria-label="窗选方式"><option>视窗内</option></select></span>
            <span class="group">
                <button class="flat" aria-label="矩形窗选"><svg><use href="#dash-box"/></svg></button>
                <button class="drop tall" aria-label="更多"></button>
                <button class="btn3d off" aria-label="箭头"><svg class="big"><use href="#arrow-off"/></svg></button>
                <button class="btn3d off" aria-label="实体"><svg class="big"><use href="#shape-off"/></svg></button>
            </span>
            <span class="group">
                <button class="btn3d off" aria-label="边"><svg><use href="#poly-off"/></svg></button>
                <button class="btn3d off" aria-label="面"><svg><use href="#poly-off"/></svg></button>
                <button class="btn3d off" aria-label="体"><svg><use href="#poly-off"/></svg></button>
            </span>
            <span class="group">
                <button class="btn3d off" aria-label="背面"><svg><use href="#cube-off"/></svg></button>
                <button class="btn3d" aria-label="返回"><svg><use href="#back"/></svg></button>
            </span>
            <button class="btn3d" aria-label="验证"><svg><use href="#check-pick"/></svg></button>
            <span class="group">
                <button class="btn3d off" aria-label="取消"><svg><use href="#no"/></svg></button>
                <button class="btn3d off" aria-label="应用"><svg class="big"><use href="#disc-off"/></svg></button>
            </span>
            <button class="btn3d" aria-label="帮助"><svg class="big"><use href="#help"/></svg></button>
        </div>
    </div>

    <div class="notice">视频教程-远程培训请联系<span class="latin">QQ369292215</span></div>

    <main class="main">
        <aside class="side">
            <div class="side-bar">
                <span class="side-grip"></span>
                <div class="side-line"><button class="tb" aria-label="挤出"><svg><use href="#s1"/></svg></button></div>
                <div class="side-line"><button class="tb" aria-label="旋转"><svg><use href="#s2"/></svg></button></div>
                <div class="side-line"><button class="tb" aria-label="扫描"><svg><use href="#s3"/></svg></button></div>
                <div class="side-line"><button class="tb" aria-label="举升"><svg><use href="#s4"/></svg></button></div>
                <div class="side-line"><button class="tb" aria-label="倒圆角"><svg><use href="#s5"/></svg></button><button class="drop" aria-label="更多"></button></div>
                <span class="side-sep"></span>
                <div class="side-line"><button class="tb" aria-label="抽壳"><svg><use href="#s6"/></svg></button></div>
                <div class="side-line"><button class="tb" aria-label="布尔"><svg><use href="#s7"/></svg></button><button class="drop" aria-label="更多"></button></div>
                <div class="side-line"><button class="tb" aria-label="牵引面"><svg><use href="#s8"/></svg></button></div>
                <div class="side-line"><button class="tb" aria-label="加厚"><svg><use href="#s9"/></svg></button></div>
                <div class="side-line"><button class="tb" aria-label="修剪"><svg><use href="#s10"/></svg></button><span class="sep"></span></div>
                <span class="side-sep"></span>
                <div class="side-line"><button class="tb" aria-label="移除面"><svg><use href="#s11"/></svg></button></div>
                <div class="side-line"><button class="tb" aria-label="立方体"><svg><use href="#s12"/></svg></button></div>
                <div class="side-line"><button class="tb" aria-label="由曲面"><svg><use href="#s13"/></svg></button></div>
                <div class="side-line"><button class="tb" aria-label="布局"><svg><use href="#s14"/></svg></button><span class="sep"></span></div>
                <span class="side-sep"></span>
                <div class="side-line"><button class="tb" aria-label="查找特征"><svg><use href="#s15"/></svg></button><button class="drop" aria-label="更多"></button></div>
                <div class="side-line"><button class="tb" aria-label="装配"><svg><use href="#s16"/></svg></button><button class="drop" aria-label="更多"></button></div>
            </div>
        </aside>

        <section class="panel">
            <div class="panel-head">
                <h2>操作管理</h2>
                <button class="drop" aria-label="菜单"></button>
                <button class="close" aria-label="关闭">X</button>
            </div>
            <div class="tabs">
                <button class="tab active">刀具路径</button>
                <button class="tab">实体</button>
            </div>
            <div class="tools">
                <button class="tb off" aria-label="全选"><svg><use href="#m-check"/></svg></button>
                <button class="tb off" aria-label="全不选"><svg><use href="#m-checkx"/></svg></button>
                <span class="sep"></span>
                <button class="tb off" aria-label="重新计算"><svg><use href="#m-t"/></svg></button>
                <button class="tb off" aria-label="计算无效"><svg><use href="#m-tx"/></svg></button>
                <span class="sep"></span>
                <button class="tb off" aria-label="模拟"><svg><use href="#m-sq"/></svg></button>
                <button class="tb off" aria-label="验证"><svg><use href="#m-blob"/></svg></button>
                <button class="tb g1">G1</button>
                <button class="tb off" aria-label="高速"><svg><use href="#m-tarrow"/></svg></button>
                <span class="sep"></span>
                <button class="tb off" aria-label="删除"><svg><use href="#m-pen"/></svg></button>
                <span class="sep"></span>
                <button class="tb off" aria-label="帮助"><svg><use href="#m-q"/></svg></button>
            </div>
            <div class="tools">
                <button class="tb off" aria-label="锁定"><svg><use href="#m-lock"/></svg></button>
                <button class="tb off" aria-label="显示路径"><svg><use href="#m-wave"/></svg></button>
                <button class="tb off" aria-label="锁定后处理"><svg><use href="#m-lock"/></svg></button>
                <span class="sep"></span>
                <button class="tb off" aria-label="下移"><svg><use href="#m-down"/></svg></button>
                <button class="tb off" aria-label="上移"><svg><use href="#m-up"/></svg></button>
                <button class="tb off" aria-label="插入"><svg><use href="#m-ret"/></svg></button>
                <button class="tb off" aria-label="滚动"><svg><use href="#m-ud"/></svg></button>
                <span class="sep"></span>
                <button class="tb off" aria-label="单一显示"><svg><use href="#m-wavex"/></svg></button>
                <button class="tb off" aria-label="关联显示"><svg><use href="#m-shapes"/></svg></button>
            </div>
            <div class="tree-box">
                <ul class="tree">
                    <li class="root">
                        <div class="node"><span class="toggle"></span><svg><use href="#t-group"/></svg><span class="label mono">Machine Group-1</span></div>
                        <ul>
                            <li>
                                <div class="node"><span class="toggle"></span><svg><use href="#t-mill"/></svg><span class="label selected">属性<span class="mono"> - Mill Default MM</span></span></div>
                                <ul>
                                    <li><div class="node"><svg><use href="#t-folder"/></svg><span class="label">文件</span></div></li>
                                    <li><div class="node"><svg><use href="#t-tool"/></svg><span class="label">刀具设置</span></div></li>
                                    <li><div class="node"><svg><use href="#t-stock"/></svg><span class="label">材料设置</span></div></li>
                                    <li><div class="node"><svg><use href="#t-warn"/></svg><span class="label">安全区域</span></div></li>
                                </ul>
                            </li>
                            <li><div class="node"><svg><use href="#t-insert"/></svg></div></li>
                        </ul>
                    </li>
                </ul>
                <div class="scrollbar">
                    <button class="scroll-btn left" aria-label="向左"></button>
                    <span class="thumb"></span>
                    <button class="scroll-btn right" aria-label="向右"></button>
                </div>
            </div>
        </section>

        <section class="viewport">
            <svg class="part" viewBox="341 150 1232 832" preserveAspectRatio="xMidYMin slice">
                <defs>
                    <clipPath id="body-clip"><ellipse cx="1030" cy="560" rx="363" ry="362"/></clipPath>
                    <clipPath id="upper"><path d="M700 330h600v230H1240V500H830v104H700z"/></clipPath>
                    <clipPath id="lower"><path d="M800 640h200v-36h260v190H800z"/></clipPath>
                    <clipPath id="right-edge"><path d="M1380 526h20v200l-100 110-28-14 10-80z"/></clipPath>
                    <clipPath id="left-edge"><path d="M660 623h22l110 196h-20l-112-100z"/></clipPath>
                </defs>
                <path d="M341 923h1232M1031 923v59" stroke="#993300" fill="none"/>
                <path d="M1052 923h521" stroke="#993300" stroke-width="2"/>
                <ellipse cx="1030" cy="560" rx="364" ry="363" fill="#006600"/>

                <!-- cara iluminada -->
                <g clip-path="url(#body-clip)" fill="#009900">
                    <path d="M660 190h490l-6 30-8 50-13 67-6 20-6 26-12 60-15 77-13 50-23 80-16 47-18 66 2 11h42l-4 16h-48l-6 29H660z"/>
                    <path d="M1111 350l44 38-3 15-41-20z"/>
                </g>
                <path d="M922 214Q1030 178 1144 216l0 5Q1030 184 922 219z" fill="#006600"/>

                <!-- bordes del disco -->
                <path clip-path="url(#right-edge)" fill-rule="evenodd" fill="#003300" d="M666 560a364 363 0 1 0 728 0a364 363 0 1 0-728 0zM660 556a364 364 0 1 0 728 0a364 364 0 1 0-728 0z"/>
                <path clip-path="url(#left-edge)" fill-rule="evenodd" fill="#006600" d="M666 560a364 363 0 1 0 728 0a364 363 0 1 0-728 0zM671 557a364 364 0 1 0 728 0a364 364 0 1 0-728 0z"/>
                <path d="M822 856A364 363 0 0 0 1275 828A368 366 0 0 1 822 853z" fill="#003300"/>

                <!-- escalon superior -->
                <g clip-path="url(#upper)" fill-rule="evenodd">
                    <path fill="#003300" d="M792 570a239 229 0 1 0 478 0a239 229 0 1 0-478 0zM793 571a238 224 0 1 0 476 0a238 224 0 1 0-476 0z"/>
                    <path fill="#006600" d="M793 571a238 224 0 1 0 476 0a238 224 0 1 0-476 0zM794 572a237 220 0 1 0 474 0a237 220 0 1 0-474 0z"/>
                </g>
                <path d="M1145 377A238 222 0 0 1 1261 629" fill="none" stroke="#009900" stroke-width="2"/>
                <path d="M1227 446A238 222 0 0 1 1268 592" fill="none" stroke="#33bb33" stroke-width="2"/>
                <path d="M1258 505A238 222 0 0 1 1268 592" fill="none" stroke="#66ee66"/>
                <path d="M890 395Q920 370 958 358" fill="none" stroke="#336633"/>

                <!-- escalon inferior -->
                <g clip-path="url(#lower)" fill-rule="evenodd">
                    <path fill="#006600" d="M818 563a212 212 0 1 0 424 0a212 212 0 1 0-424 0zM819 563a211 207 0 1 0 422 0a211 207 0 1 0-422 0z"/>
                    <path fill="#003300" d="M819 563a211 207 0 1 0 422 0a211 207 0 1 0-422 0zM820 563a210 202 0 1 0 420 0a210 202 0 1 0-420 0z"/>
                </g>
                <path d="M823 524A212 212 0 0 0 853 680" fill="none" stroke="#33bb33"/>
                <path d="M820 540A212 212 0 0 0 834 642" fill="none" stroke="#88ee88" stroke-width="2"/>
                <path d="M1097 765Q1135 752 1157 733" fill="none" stroke="#336633"/>

                <!-- agujeros -->
                <circle cx="891" cy="560" r="30" fill="#006600"/>
                <path d="M897 531Q918 537 921 556" fill="none" stroke="#003300"/>
                <circle cx="889" cy="560" r="18"/>
                <circle cx="1169" cy="560" r="18"/>
                <path d="M1176 530Q1195 536 1200 553" fill="none" stroke="#003300"/>

                <!-- pernos -->
                <path d="M1001 250Q1002 240 1005 234V266h-4z" fill="#006600"/>
                <path d="M1027 219q28 2 29 25t-26 25q-7 0-10-3z" fill="#006600"/>
                <path d="M1054 233q5 9 5 20v15q-2 26-28 26t-29-26v-14l3 10 1-7q6 12 24 12 25-1 26-25z" fill="#003300"/>
                <path d="M695 608q0-12 3-18v20z" fill="#006600"/>
                <path d="M738 589q3 8 3 18v10q-2 22-23 22t-23-22v-12l3-1q5 10 20 10 18-2 20-19z" fill="#003300"/>
                <path d="M1333 683q3 10 3 22v12q-3 26-28 26t-28-26v-12l3 3 3-3q8 13 22 13 25-3 26-26z" fill="#003300"/>

                <path d="M1032 151v660" stroke="#993300" stroke-width="2"/>

                <!-- ejes -->
                <path d="M383 939v20" stroke="#00ff00"/>
                <path d="M383 958h19" stroke="#ff0000"/>
                <path d="M379 923h2l2 4 1-4h2M382 924v6M380 930h4" stroke="#00ff00" fill="none"/>
                <path d="M408 954h6M408 961h6M409 955l4 5M413 955l-4 5" stroke="#ff0000" fill="none" stroke-width="2"/>
            </svg>
            <div class="status">
                <span>视角:俯视图</span>
                <span>WCS:俯视图</span>
                <span>刀具/绘图面:俯视图</span>
            </div>
        </section>
    </main>

    <svg class="cursor" viewBox="0 0 14 22" aria-hidden="true"><path d="M1 1v14l3-3 3 8 3-1-3-7h5z" fill="#fff" stroke="#000"/></svg>
</body>
</html>
```

FILE: styles.css
```css
:root {
    --face: #cccccc;
    --shadow: #999999;
    --light: #ffffff;
    --dark: #333333;
    --cream: #ffffcc;
    --select: #003366;
    --cjk: "Liberation Sans", "Noto Sans CJK SC", sans-serif;
    --mono: "Liberation Mono", "Noto Sans CJK SC", monospace;
}

*,
*::before,
*::after {
    margin: 0;
    padding: 0;
    box-sizing: border-box;
}

body {
    position: relative;
    height: 100vh;
    display: flex;
    flex-direction: column;
    overflow: hidden;
    border: 1px solid #000;
    background: var(--face);
    font-family: var(--cjk);
    font-size: 12px;
    line-height: 16px;
    color: #000;
}

button {
    border: none;
    background: none;
    font: inherit;
    color: inherit;
}

button,
a {
    flex: none;
}

svg {
    flex: none;
    width: 16px;
    height: 16px;
    display: block;
    shape-rendering: crispEdges;
}

ul {
    list-style: none;
}

.sprite {
    position: absolute;
    width: 0;
    height: 0;
}

/* Titulo y menu */
.titlebar {
    flex: none;
    display: flex;
    align-items: flex-end;
    height: 6px;
    margin-right: 82px;
    padding-left: 18px;
    overflow: hidden;
    background: var(--shadow);
}

.title {
    font-size: 12px;
    line-height: 16px;
    color: #ddd;
    white-space: nowrap;
}

.menu {
    flex: none;
    display: flex;
    align-items: center;
    gap: 12px;
    height: 21px;
    padding: 2px 0 0 5px;
    border-bottom: 1px solid var(--shadow);
    box-shadow: 0 1px var(--light);
}

.menu a {
    display: flex;
    color: var(--shadow);
    text-decoration: none;
}

.key {
    width: 12px;
    font-family: var(--mono);
    font-size: 10px;
}

/* Barras */
.row {
    flex: none;
    align-self: flex-start;
    display: flex;
    height: 30px;
    border-top: 1px solid var(--light);
    border-bottom: 1px solid var(--shadow);
}

.band {
    display: flex;
    align-items: center;
    padding: 0 4px 0 3px;
    border-left: 1px solid var(--light);
    border-right: 1px solid var(--shadow);
}

.band::before,
.grip {
    content: "";
    width: 3px;
    height: 22px;
    margin-right: 4px;
    border: 1px solid var(--light);
    border-right-color: var(--shadow);
    border-bottom-color: var(--shadow);
}

.stub {
    width: 3px;
    border-left: 1px solid var(--light);
    border-right: 1px solid var(--shadow);
}

.stub.wide {
    width: 7px;
}

.stub.blank {
    width: 26px;
}

.tb {
    display: flex;
    align-items: center;
    justify-content: center;
    width: 23px;
    height: 22px;
}

.hot {
    border: 1px solid var(--light);
    border-right-color: var(--shadow);
    border-bottom-color: var(--shadow);
}

.off svg {
    filter: drop-shadow(1px 1px 0 #fff);
}

.drop {
    display: flex;
    align-items: center;
    justify-content: center;
    width: 13px;
    height: 22px;
}

.drop::after,
.down::after {
    content: "";
    border: 3px solid transparent;
    border-top-color: #000;
    border-bottom: none;
}

.drop.dim::after,
.down.dim::after {
    border-top-color: var(--shadow);
}

.sep {
    width: 2px;
    height: 18px;
    margin: 0 3px;
    border-left: 1px solid var(--shadow);
    border-right: 1px solid var(--light);
}

/* Coordenadas */
.inputs {
    align-self: stretch;
    height: 31px;
    border-top-color: var(--face);
}

.coords,
.select-bar {
    display: flex;
    align-items: center;
    background: var(--cream);
    border-right: 1px solid var(--shadow);
}

.coords {
    gap: 4px;
    padding: 0 6px 0 3px;
}

.select-bar {
    gap: 7px;
    padding: 0 7px 0 3px;
    border-left: 1px solid var(--light);
}

.select-bar .grip {
    margin-right: 0;
}

.group {
    display: flex;
    gap: 1px;
}

.btn3d,
.flat {
    display: flex;
    align-items: center;
    justify-content: center;
    width: 23px;
    height: 23px;
    background: var(--face);
}

.btn3d {
    border: 1px solid var(--light);
    border-right: 2px solid var(--dark);
    border-bottom: 2px solid var(--dark);
}

.word {
    width: 48px;
}

.big {
    width: 20px;
    height: 20px;
}

.tall {
    width: 14px;
    height: 23px;
    background: var(--face);
}

.combo {
    display: flex;
    width: 71px;
    height: 20px;
    margin-right: 9px;
    background: var(--face);
    border: 2px solid var(--dark);
    border-right: 1px solid var(--light);
    border-bottom: 1px solid var(--light);
}

.combo.last {
    margin-right: 2px;
}

.combo input {
    flex: 1;
    min-width: 0;
    border: none;
    background: none;
    font: inherit;
    font-size: 11px;
}

.down {
    display: flex;
    align-items: center;
    justify-content: center;
    width: 16px;
    border: 1px solid var(--light);
    border-right-color: var(--dark);
    border-bottom-color: var(--dark);
}

.down::after {
    border-width: 4px;
    border-bottom: none;
}

.view-select {
    position: relative;
    width: 71px;
    height: 20px;
    margin-right: 2px;
}

.view-select select {
    appearance: none;
    width: 100%;
    height: 100%;
    padding-left: 1px;
    background: #fff;
    border: 2px solid var(--dark);
    border-right: 1px solid var(--light);
    border-bottom: 1px solid var(--light);
    border-radius: 0;
    font: inherit;
    color: #000;
}

.view-select::before,
.view-select::after {
    content: "";
    position: absolute;
    pointer-events: none;
}

.view-select::before {
    top: 2px;
    right: 1px;
    width: 16px;
    height: 17px;
    background: var(--face);
    border: 1px solid var(--light);
    border-right-color: var(--dark);
    border-bottom-color: var(--dark);
}

.view-select::after {
    top: 9px;
    right: 5px;
    border: 4px solid transparent;
    border-top-color: #000;
    border-bottom: none;
}

.notice {
    flex: none;
    height: 31px;
    padding-left: 186px;
    border-top: 1px solid var(--light);
    border-bottom: 1px solid var(--shadow);
    line-height: 31px;
}

.latin {
    font-size: 11px;
}

/* Zona principal */
.main {
    flex: 1;
    min-height: 0;
    display: flex;
}

.side {
    flex: none;
    width: 42px;
    padding-top: 3px;
    border-right: 2px solid var(--light);
}

.side-bar {
    display: flex;
    flex-direction: column;
    padding: 4px 0 4px 1px;
    border-top: 1px solid var(--light);
    border-bottom: 1px solid var(--shadow);
    box-shadow: 0 1px var(--light);
}

.side-grip {
    height: 3px;
    margin: 0 4px 5px 1px;
    border: 1px solid var(--light);
    border-right-color: var(--shadow);
    border-bottom-color: var(--shadow);
}

.side-line {
    display: flex;
    align-items: center;
    height: 22px;
}

.side-sep {
    height: 2px;
    margin: 3px 4px 3px 3px;
    border-top: 1px solid var(--shadow);
    border-bottom: 1px solid var(--light);
}

.panel {
    flex: none;
    display: flex;
    flex-direction: column;
    width: 298px;
    border-top: 1px solid var(--light);
    overflow: hidden;
}

.panel-head {
    display: flex;
    align-items: center;
    height: 17px;
    padding: 0 3px 2px 4px;
}

.panel-head h2 {
    flex: 1;
    font-size: 11px;
    font-weight: normal;
}

.close {
    width: 16px;
    font-family: var(--mono);
    font-size: 10px;
}

.tabs {
    display: flex;
    align-items: flex-end;
    height: 22px;
}

.tab {
    height: 20px;
    padding: 0 9px 0 5px;
    border-top: 1px solid var(--light);
    border-right: 2px solid var(--dark);
}

.tab.active {
    height: 22px;
    padding: 0 5px 0 6px;
    border-left: 1px solid var(--light);
}

.tools {
    display: flex;
    align-items: center;
    height: 31px;
    margin: 0 16px 0 2px;
    padding-left: 5px;
    border-top: 1px solid var(--shadow);
    box-shadow: inset 0 1px var(--light);
}

.tabs + .tools {
    margin-top: 2px;
}

.tools .sep {
    height: 19px;
    margin: 0 2px;
}

.g1 {
    font-family: "Liberation Serif", serif;
    font-size: 13px;
    font-weight: bold;
    color: var(--shadow);
    text-shadow: 1px 1px #fff;
}

.tree-box {
    flex: 1;
    min-height: 0;
    display: flex;
    flex-direction: column;
    margin: 6px 8px 0 4px;
    overflow: hidden;
    background: #fff;
    border-top: 2px solid var(--dark);
    border-left: 2px solid var(--dark);
    border-right: 1px solid var(--light);
}

.tree {
    flex: 1;
    padding-left: 11px;
}

.tree ul {
    margin-left: 19px;
}

.tree li {
    position: relative;
}

.tree li::before {
    content: "";
    position: absolute;
    top: 0;
    left: 0;
    width: 11px;
    height: 9px;
    border-left: 1px dotted #000;
    border-bottom: 1px dotted #000;
}

.tree .root::before {
    border-left: none;
}

.tree li li:not(:last-child)::after {
    content: "";
    position: absolute;
    top: 8px;
    bottom: 0;
    left: 0;
    border-left: 1px dotted #000;
}

.node {
    position: relative;
    display: flex;
    align-items: center;
    gap: 4px;
    height: 16px;
    padding-left: 11px;
}

.toggle {
    position: absolute;
    z-index: 1;
    top: 4px;
    left: -4px;
    width: 9px;
    height: 9px;
    border: 1px solid #000;
    background: linear-gradient(#000, #000) center / 5px 1px no-repeat #fff;
}

.label {
    line-height: 16px;
    white-space: pre;
}

.mono {
    font-family: var(--mono);
    font-size: 10px;
}

.selected {
    padding: 0 1px;
    background: var(--select);
    color: #fff;
}

.scrollbar {
    flex: none;
    display: flex;
    height: 7px;
    overflow: hidden;
    background: #e6e6e6;
}

.scroll-btn,
.thumb {
    height: 16px;
    background: var(--face);
    border: 1px solid var(--light);
    border-right-color: var(--dark);
}

.scroll-btn {
    display: flex;
    align-items: center;
    justify-content: center;
    width: 16px;
}

.scroll-btn::after {
    content: "";
    border: 4px solid transparent;
}

.scroll-btn.left::after {
    border-right-color: #000;
    border-left: none;
}

.scroll-btn.right::after {
    border-left-color: #000;
    border-right: none;
}

.thumb {
    width: 58%;
    margin-right: auto;
}

/* Vista grafica */
.viewport {
    position: relative;
    flex: 1;
    min-width: 0;
    overflow: hidden;
    background: #000;
}

.part {
    width: 100%;
    height: 100%;
}

.status {
    position: absolute;
    left: 8px;
    bottom: -8px;
    display: flex;
    gap: 20px;
    height: 16px;
    font-family: var(--mono);
    font-size: 13px;
    color: #ddd;
}

.cursor {
    position: absolute;
    top: 74px;
    left: 418px;
    width: 14px;
    height: 22px;
}
```
